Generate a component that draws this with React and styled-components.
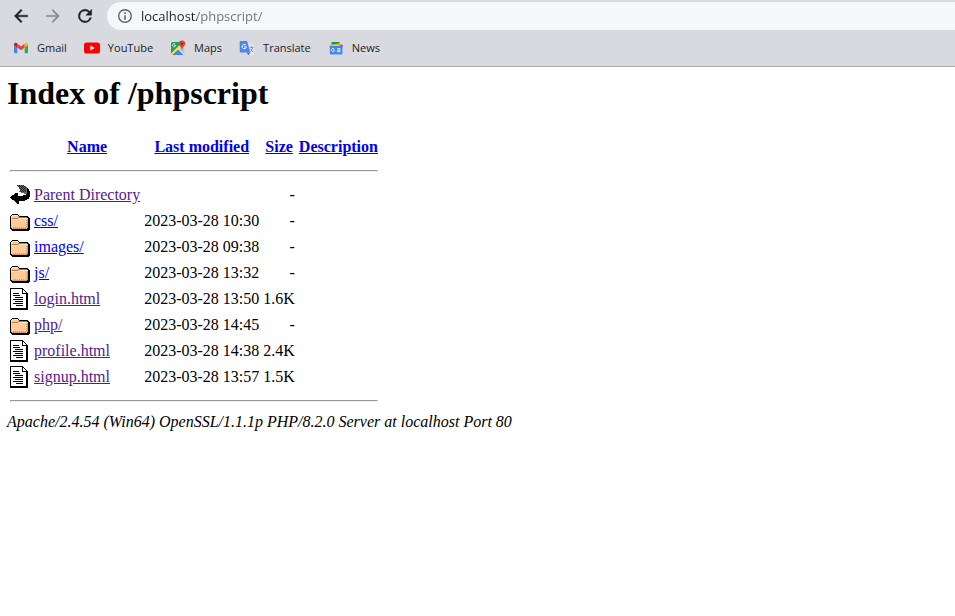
import React from "react";
import styled, { createGlobalStyle } from "styled-components";

const GlobalStyle = createGlobalStyle`
  body {
    margin: 0;
    background: #fff;
  }
`;

const BrowserBar = styled.header`
  background: #d9dae0;
  border-bottom: 1px solid #a9aaae;
  font-family: "Open Sans", "Noto Sans", sans-serif;
  overflow: hidden;
`;

const Toolbar = styled.div`
  display: flex;
  align-items: center;
  padding: 2px 0 0 5px;
`;

const NavButtons = styled.div`
  display: flex;
  flex: none;
`;

const IconButton = styled.button`
  display: flex;
  align-items: center;
  justify-content: center;
  width: 32px;
  height: 28px;
  padding: 0;
  border: 0;
  background: transparent;
  color: ${(p) => (p.disabled ? "#8b8d91" : "#202124")};

  svg {
    fill: currentColor;
  }
`;

const AddressBar = styled.label`
  display: flex;
  align-items: center;
  flex: 1;
  gap: 8px;
  height: 28px;
  margin-left: 6px;
  padding-left: 10px;
  border-radius: 14px 0 0 14px;
  background: #f5f7fa;
`;

const AddressInput = styled.input`
  flex: 1;
  min-width: 0;
  padding: 0;
  border: 0;
  outline: 0;
  font: 13px/20px "Open Sans", "Noto Sans", sans-serif;
  color: transparent;
  caret-color: #202124;
  background: linear-gradient(90deg, #202124 56px, #707276 56px);
  background-clip: text;
`;

const Bookmarks = styled.nav`
  display: flex;
  align-items: center;
  gap: 17px;
  height: 36px;
  padding-left: 13px;
`;

const Bookmark = styled.a`
  display: flex;
  align-items: center;
  gap: 8px;
  font-size: 11px;
  line-height: 16px;
  color: #202126;
  text-decoration: none;
`;

const Page = styled.main`
  padding: 8px 7px;
  font-family: "Liberation Serif", "Times New Roman", serif;
  font-size: 16px;
  line-height: 18px;
  color: #000;
`;

const Title = styled.h1`
  margin: 0 0 21px;
  font-size: 32px;
  line-height: 37px;
`;

const Listing = styled.table`
  border-spacing: 2px;

  th,
  td {
    padding: 1px;
  }
`;

const HeadCell = styled.th`
  height: 22px;
`;

const IconCell = styled.td`
  vertical-align: top;

  svg {
    display: block;
  }
`;

const NumberCell = styled.td`
  text-align: right;
`;

const Rule = styled.hr`
  margin: 8px 0;
  border: 1px solid;
  border-color: #9a9a9a #eee #eee #9a9a9a;
`;

const FileLink = styled.a`
  color: ${(p) => (p.$visited ? "#551a8b" : "#0000ee")};
  text-decoration: underline;
`;

const Signature = styled.address`
  font-style: italic;
`;

const BackIcon = () => (
  <svg width="20" height="20" viewBox="0 0 24 24" aria-hidden="true">
    <path d="M20 11H7.83l5.59-5.59L12 4l-8 8 8 8 1.41-1.41L7.83 13H20z" stroke="currentColor" strokeWidth=".5" />
  </svg>
);

const ForwardIcon = () => (
  <svg width="20" height="20" viewBox="0 0 24 24" aria-hidden="true">
    <path d="m12 4-1.41 1.41L16.17 11H4v2h12.17l-5.58 5.59L12 20l8-8z" stroke="currentColor" strokeWidth=".3" />
  </svg>
);

const ReloadIcon = () => (
  <svg width="20" height="20" viewBox="0 0 24 24" aria-hidden="true">
    <path
      d="M17.65 6.35A7.96 7.96 0 0 0 12 4a8 8 0 1 0 7.73 10h-2.08A6 6 0 1 1 12 6c1.66 0 3.14.69 4.22 1.78L13 11h7V4z"
      stroke="currentColor"
      strokeWidth=".5"
    />
  </svg>
);

const InfoIcon = () => (
  <svg width="16" height="16" viewBox="0 0 16 16" aria-hidden="true">
    <circle cx="8" cy="8" r="6.3" fill="none" stroke="#5f6368" strokeWidth="1.4" />
    <path d="M7.2 4.3h1.6v1.6H7.2zM7.2 7.2h1.6v4.5H7.2z" fill="#5f6368" />
  </svg>
);

const GmailIcon = () => (
  <svg width="16" height="16" viewBox="0 0 16 16" aria-hidden="true">
    <path d="M1 4.5 4.3 7v6.2H2a1 1 0 0 1-1-1z" fill="#4285f4" />
    <path d="M11.7 7 15 4.5v7.7a1 1 0 0 1-1 1h-2.3z" fill="#34a853" />
    <path d="M4.3 3.6 8 6.4l3.7-2.8V7.4L8 10.2 4.3 7.4z" fill="#ea4335" />
    <path d="M1 4.4c0-1.5 1.6-2.2 2.7-1.3l.6.5v3.8L1 5z" fill="#c5221f" />
    <path d="m11.7 3.6.6-.5C13.4 2.2 15 2.9 15 4.4V5l-3.3 2.4z" fill="#fbbc04" />
  </svg>
);

const YouTubeIcon = () => (
  <svg width="16" height="16" viewBox="0 0 16 16" aria-hidden="true">
    <rect y="2.4" width="16" height="11.2" rx="2.6" fill="#f00" />
    <path d="M6.4 5.6v4.8L10.6 8z" fill="#fff" />
  </svg>
);

const MapsIcon = () => (
  <svg width="16" height="16" viewBox="0 0 16 16" aria-hidden="true">
    <rect x="1" y="2" width="13.5" height="13" rx="1.4" fill="#e8eaed" />
    <path d="M2.4 2H11L7.8 8 1 14V3.4A1.4 1.4 0 0 1 2.4 2z" fill="#1fa15d" />
    <path d="m2 15 5.8-5.8L13.6 15z" fill="#4285f4" />
    <path d="m1 13.4 10-9.8 1.2 2.2L2 15z" fill="#ffdd48" />
    <path d="m8.7 9 4-2 1.8 1.4V14z" fill="#bdc1c6" />
    <path d="M5.6 5.2H4.1M5.5 5.5A1.5 1.5 0 1 1 5 4.1" fill="none" stroke="#fff" strokeWidth=".8" />
    <path d="M12 .5a3.2 3.2 0 0 0-3.2 3.2c0 2.3 2.6 3.1 3.2 6.4.6-3.3 3.2-4.1 3.2-6.4A3.2 3.2 0 0 0 12 .5z" fill="#dc4437" />
    <circle cx="12" cy="3.8" r="1.1" fill="#812a24" />
  </svg>
);

const TranslateIcon = () => (
  <svg width="16" height="16" viewBox="0 0 16 16" aria-hidden="true">
    <path d="M6 4h8a1 1 0 0 1 1 1v9.2a1 1 0 0 1-1 1H9.5z" fill="#e4e5e7" />
    <path d="M10.8 7.4h3.6M12.6 6.4v1m1 0c-.3 2-1.2 3.3-2 4.1m0-2.6c.6 1.4 1.5 2.3 2.6 3.1" fill="none" stroke="#7d8a92" strokeWidth=".9" />
    <path d="M7.6 12.4h3.7l-2 2.8z" fill="#3367d6" />
    <path d="M1.7 1h6.4l3.2 11.4H1.7a1 1 0 0 1-1-1V2a1 1 0 0 1 1-1z" fill="#4a86ee" />
    <path d="M7.5 6.8H5.3M7.4 7.1A2.2 2.2 0 1 1 6.8 5" fill="none" stroke="#fff" strokeWidth="1" />
  </svg>
);

const NewsIcon = () => (
  <svg width="16" height="16" viewBox="0 0 16 16" aria-hidden="true">
    <path d="M3.5 2h8v6h-8z" fill="#0c9d58" />
    <path d="m10 3.7 5 1.2-1 4H9z" fill="#ea4335" />
    <path d="m1 5 10.5-1.6 1 4-10 2z" fill="#ffc107" />
    <rect x="1.8" y="6" width="12.6" height="8.4" rx=".8" fill="#4285f4" />
    <path d="M6.8 10.2H5.3M6.6 10.6a1.6 1.6 0 1 1-.4-1.6M9 8.7h3.3M9 10.2h3.8M9 11.7h3.3" fill="none" stroke="#fff" strokeWidth=".9" />
  </svg>
);

const ParentIcon = () => (
  <svg width="20" height="22" viewBox="0 0 20 22" shapeRendering="crispEdges" aria-hidden="true">
    <path d="M7 1h7v1h2v1h1v2h1v6h-2v-1h-2V9h-3V8H9V7h1V5H9V3H8V2H7z" fill="#666" />
    <path d="M7 1h1v1H7zM9 1h1v1H9zM11 1h1v1h-1zM13 1h1v1h-1zM8 2h1v1H8zM10 2h1v1h-1zM12 2h1v1h-1zM14 2h1v1h-1zM9 3h1v1H9zM11 3h1v1h-1zM13 3h1v1h-1zM15 3h1v1h-1zM10 4h1v1h-1zM12 4h1v1h-1zM14 4h1v1h-1zM11 5h1v1h-1zM13 5h1v1h-1zM15 5h1v1h-1zM10 6h1v1h-1zM12 6h1v1h-1zM14 6h1v1h-1zM11 7h1v1h-1zM13 7h1v1h-1zM15 7h1v1h-1z" fill="#222" />
    <path d="M17 4h1v1h1v2h1v6h-1v2h-2v1h-2v1H9v3H7v-1H6v-1H5v-1H4v-1H2v-1H1v-1H0v-1h1v-1h1v-1h2v-1h1v-1h1V9h2v3h5v-1h3v-1h1z" fill="#000" />
  </svg>
);

const FolderIcon = () => (
  <svg width="20" height="22" viewBox="0 0 20 22" shapeRendering="crispEdges" aria-hidden="true">
    <path d="M2 4h6v1h1v1h9v1h1v1h1v12h-1v1H2v-1H1v-1H0V6h1V5h1z" fill="#000" />
    <path d="M2 5h6v1h1v1h8v1h1v10h-1v1H2v-1H1V6h1z" fill="#ffcc99" />
    <path d="M2 5h6v1H2zM1 6h1v2H1zM2 9h6v1H2zM9 8h8v1H9z" fill="#ffe5cc" />
    <path d="M2 8h6v1H2zM8 7h9v1H8z" fill="#a87850" />
    <path d="M17 9h1v9h-1zM3 17h1v1H3zM5 17h1v1H5zM7 17h1v1H7zM9 17h1v1H9zM11 17h1v1h-1zM13 17h1v1h-1zM15 17h1v1h-1zM2 18h15v1H2zM16 10h1v1h-1zM16 12h1v1h-1zM16 14h1v1h-1zM16 16h1v1h-1z" fill="#d99a62" />
  </svg>
);

const DocumentIcon = () => (
  <svg width="20" height="22" viewBox="0 0 20 22" shapeRendering="crispEdges" aria-hidden="true">
    <path d="M0 0h13v1h1v1h1v1h1v1h1v1h1v17H0z" fill="#000" />
    <path d="M1 1h11v5h4v14H1z" fill="#fff" />
    <path d="M13 2h1v1h1v1h1v1h-3z" fill="#fff" />
    <path d="M3 5h6v1H3zM3 7h7v1H3zM5 9h8v1H5zM3 11h10v1H3zM5 13h8v1H5zM3 15h10v1H3zM6 17h7v1H6z" fill="#000" />
  </svg>
);

const bookmarks = [
  { label: "Gmail", Icon: GmailIcon },
  { label: "YouTube", Icon: YouTubeIcon },
  { label: "Maps", Icon: MapsIcon },
  { label: "Translate", Icon: TranslateIcon },
  { label: "News", Icon: NewsIcon },
];

const files = [
  { name: "Parent Directory", Icon: ParentIcon, modified: "", size: "-", visited: true },
  { name: "css/", Icon: FolderIcon, modified: "2023-03-28 10:30", size: "-" },
  { name: "images/", Icon: FolderIcon, modified: "2023-03-28 09:38", size: "-" },
  { name: "js/", Icon: FolderIcon, modified: "2023-03-28 13:32", size: "-" },
  { name: "login.html", Icon: DocumentIcon, modified: "2023-03-28 13:50", size: "1.6K", visited: true },
  { name: "php/", Icon: FolderIcon, modified: "2023-03-28 14:45", size: "-", visited: true },
  { name: "profile.html", Icon: DocumentIcon, modified: "2023-03-28 14:38", size: "2.4K", visited: true },
  { name: "signup.html", Icon: DocumentIcon, modified: "2023-03-28 13:57", size: "1.5K", visited: true },
];

const columns = ["Name", "Last modified", "Size", "Description"];

const RuleRow = () => (
  <tr>
    <th colSpan={5}>
      <Rule />
    </th>
  </tr>
);

export default function App() {
  return (
    <>
      <GlobalStyle />
      <BrowserBar>
        <Toolbar>
          <NavButtons>
            <IconButton type="button" aria-label="Back"><BackIcon /></IconButton>
            <IconButton type="button" aria-label="Forward" disabled><ForwardIcon /></IconButton>
            <IconButton type="button" aria-label="Reload"><ReloadIcon /></IconButton>
          </NavButtons>
          <AddressBar>
            <InfoIcon />
            <AddressInput type="text" aria-label="Address" defaultValue="localhost/phpscript/" spellCheck={false} />
          </AddressBar>
        </Toolbar>
        <Bookmarks aria-label="Bookmarks">
          {bookmarks.map(({ label, Icon }) => (
            <Bookmark key={label} href={`#${label.toLowerCase()}`}>
              <Icon />
              {label}
            </Bookmark>
          ))}
        </Bookmarks>
      </BrowserBar>
      <Page>
        <Title>Index of /phpscript</Title>
        <Listing>
          <thead>
            <tr>
              <HeadCell aria-label="Type" />
              {columns.map((column) => (
                <HeadCell key={column} scope="col">
                  <FileLink href="#sort">{column}</FileLink>
                </HeadCell>
              ))}
            </tr>
          </thead>
          <tbody>
            <RuleRow />
            {files.map(({ name, Icon, modified, size, visited }) => (
              <tr key={name}>
                <IconCell><Icon /></IconCell>
                <td><FileLink href="#file" $visited={visited}>{name}</FileLink></td>
                <NumberCell>{modified}</NumberCell>
                <NumberCell>{size}</NumberCell>
                <td />
              </tr>
            ))}
            <RuleRow />
          </tbody>
        </Listing>
        <Signature>Apache/2.4.54 (Win64) OpenSSL/1.1.1p PHP/8.2.0 Server at localhost Port 80</Signature>
      </Page>
    </>
  );
}
